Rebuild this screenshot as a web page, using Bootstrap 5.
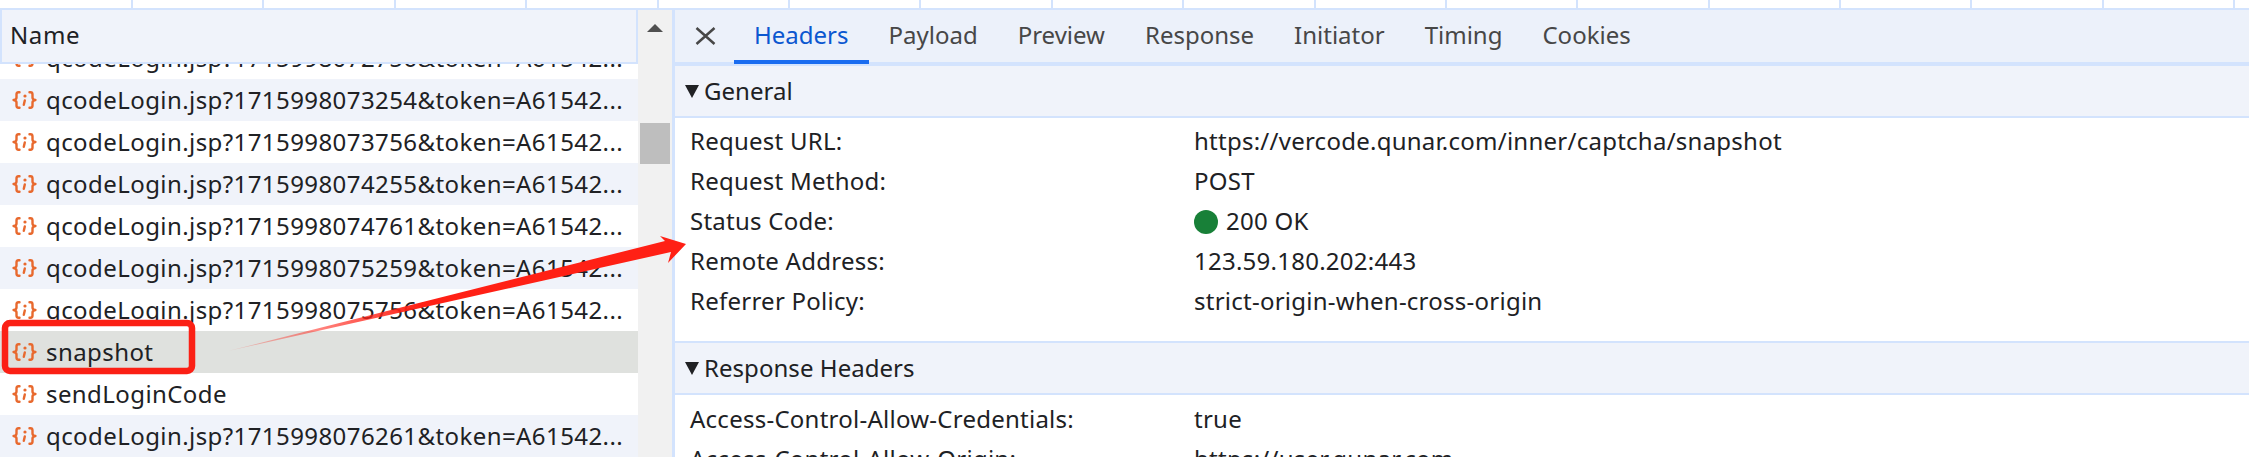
<!DOCTYPE html>
<html lang="en"><head><meta charset="utf-8">
<link href="https://cdn.jsdelivr.net/npm/bootstrap@5.3.0/dist/css/bootstrap.min.css" rel="stylesheet">
<style>
html,body{margin:0;height:457px;overflow:hidden;background:#fff}
body{font-family:"Noto Sans","Open Sans",sans-serif;font-size:24px;letter-spacing:.25px;color:#202124;position:relative}
.ruler{height:10px;border-bottom:2px solid #d3e3fd;padding-left:131px;gap:129.4px}
.ruler i{width:2px;height:8px;background:#d3e3fd;display:block;flex:none}
.main{height:447px}
.netlist{width:672px;flex:none}
.listcol{width:638px;flex:none}
.namehead{height:54px;background:#f0f3fa;border:2px solid #d3e3fd;border-top:0;padding-left:8px;line-height:50px;letter-spacing:.6px}
.rq{height:42px;line-height:42px;padding-left:12px;gap:9px;white-space:nowrap;overflow:hidden;letter-spacing:.42px}
.rq.first{height:15px;align-items:flex-end;line-height:42px}
.rq.stripe{background:#f0f3fa}
.rq.sel{background:#dfe1de}
.rq svg{width:25px;height:18px;flex:none}
.rq.first svg{margin-bottom:12px}
.sbar{width:34px;background:#f1f1f1;position:relative;flex:none}
.sbtn{display:block;margin:14px auto 0}
.sthumb{width:30px;height:41px;background:#bebebe;margin:91px 0 0 2px}
.detail{border-left:3px solid #d3e3fd;min-width:0}
.tabbar{height:56px;background:#ecf1fa;border-bottom:4px solid #d3e3fd}
.xbtn{width:59px;flex:none;padding-left:20px}
.tb{padding:0 20px;height:54px;line-height:50px;color:#474747;white-space:nowrap;letter-spacing:0}
.tb.on{color:#0b57d0;border-bottom:4px solid #1a6cf0}
.sect{height:52px;background:#f0f3fa;border-bottom:2px solid #d3e3fd;padding-left:10px;gap:5px;letter-spacing:.05px}
.sect svg{width:14px;height:13px;flex:none}
.kv{height:40px;line-height:40px;padding-left:15px;white-space:nowrap}
.kv .kk{width:504px;flex:none}
.dot{width:24px;height:24px;border-radius:50%;background:#188038;display:inline-block;margin-right:8px;vertical-align:-4px}
.gen{height:225px;padding-top:3px;border-bottom:2px solid #d3e3fd}
.over{position:absolute;left:0;top:0;pointer-events:none}
</style></head><body>
<div class="ruler d-flex"><i></i><i></i><i></i><i></i><i></i><i></i><i></i><i></i><i></i><i></i><i></i><i></i><i></i><i></i><i></i><i></i><i></i></div>
<svg width="0" height="0" class="position-absolute"><defs>
<symbol id="rqi" viewBox="0 0 25 18"><g fill="none" stroke="#e8692e" stroke-width="2.400" stroke-linecap="round" stroke-linejoin="round"><path d="M7.500 1.300H6.500C5 1.300 4.500 2 4.500 3.500V6.500C4.500 8 3.500 8.800 1.500 9 3.500 9.200 4.500 10 4.500 11.500V14.500C4.500 16 5 16.700 6.500 16.700H7.500"/><path d="M17.500 1.300H18.500C20 1.300 20.500 2 20.500 3.500V6.500C20.500 8 21.500 8.800 23.500 9 21.500 9.200 20.500 10 20.500 11.500V14.500C20.500 16 20 16.700 18.500 16.700H17.500"/><path d="M12.800 9.500L11.800 13.800"/></g><circle cx="13" cy="5" r="1.600" fill="#e8692e"/></symbol>
</defs></svg>
<div class="main d-flex">
 <div class="netlist d-flex">
  <div class="listcol">
   <div class="namehead">Name</div>
   <div class="rq first d-flex"><svg><use href="#rqi"/></svg><span>qcodeLogin.jsp?1715998072756&amp;token=A61542...</span></div>
   <div class="rq stripe d-flex align-items-center"><svg><use href="#rqi"/></svg><span>qcodeLogin.jsp?1715998073254&amp;token=A61542...</span></div>
   <div class="rq d-flex align-items-center"><svg><use href="#rqi"/></svg><span>qcodeLogin.jsp?1715998073756&amp;token=A61542...</span></div>
   <div class="rq stripe d-flex align-items-center"><svg><use href="#rqi"/></svg><span>qcodeLogin.jsp?1715998074255&amp;token=A61542...</span></div>
   <div class="rq d-flex align-items-center"><svg><use href="#rqi"/></svg><span>qcodeLogin.jsp?1715998074761&amp;token=A61542...</span></div>
   <div class="rq stripe d-flex align-items-center"><svg><use href="#rqi"/></svg><span>qcodeLogin.jsp?1715998075259&amp;token=A61542...</span></div>
   <div class="rq d-flex align-items-center"><svg><use href="#rqi"/></svg><span>qcodeLogin.jsp?1715998075756&amp;token=A61542...</span></div>
   <div class="rq sel d-flex align-items-center"><svg><use href="#rqi"/></svg><span>snapshot</span></div>
   <div class="rq d-flex align-items-center"><svg><use href="#rqi"/></svg><span>sendLoginCode</span></div>
   <div class="rq stripe d-flex align-items-center"><svg><use href="#rqi"/></svg><span>qcodeLogin.jsp?1715998076261&amp;token=A61542...</span></div>
  </div>
  <div class="sbar">
   <svg class="sbtn" width="16" height="8" viewBox="0 0 16 8"><path d="M8 0l8 8H0z" fill="#505050"/></svg>
   <div class="sthumb"></div>
  </div>
 </div>
 <div class="detail flex-grow-1">
  <div class="tabbar d-flex">
   <div class="xbtn d-flex align-items-center"><svg width="21" height="18" viewBox="0 0 21 18"><path d="M1.500 1l18 16M19.500 1L1.500 17" stroke="#474747" stroke-width="2.500" fill="none"/></svg></div>
   <div class="tb on">Headers</div><div class="tb">Payload</div><div class="tb">Preview</div><div class="tb">Response</div><div class="tb">Initiator</div><div class="tb">Timing</div><div class="tb">Cookies</div>
  </div>
  <div class="sect d-flex align-items-center"><svg viewBox="0 0 14 13"><path d="M0 0h14L7 13z" fill="#202124"/></svg><span>General</span></div>
  <div class="gen">
   <div class="kv d-flex"><div class="kk">Request URL:</div><div>https://vercode.qunar.com/inner/captcha/snapshot</div></div>
   <div class="kv d-flex"><div class="kk">Request Method:</div><div>POST</div></div>
   <div class="kv d-flex"><div class="kk">Status Code:</div><div><span class="dot"></span>200 OK</div></div>
   <div class="kv d-flex"><div class="kk">Remote Address:</div><div>123.59.180.202:443</div></div>
   <div class="kv d-flex"><div class="kk">Referrer Policy:</div><div>strict-origin-when-cross-origin</div></div>
  </div>
  <div class="sect d-flex align-items-center"><svg viewBox="0 0 14 13"><path d="M0 0h14L7 13z" fill="#202124"/></svg><span>Response Headers</span></div>
  <div class="pt-1">
   <div class="kv d-flex"><div class="kk">Access-Control-Allow-Credentials:</div><div>true</div></div>
   <div class="kv d-flex"><div class="kk">Access-Control-Allow-Origin:</div><div>https://user.qunar.com</div></div>
  </div>
 </div>
</div>
<svg class="over" width="2249" height="457" viewBox="0 0 2249 457">
 <defs><linearGradient id="fade" gradientUnits="userSpaceOnUse" x1="228" y1="351" x2="420" y2="303"><stop offset="0" stop-color="#ff2015" stop-opacity=".15"/><stop offset="1" stop-color="#ff2015"/></linearGradient></defs>
 <path d="M228 351L665 241 660 236 686 244 668 263 671 252z" fill="url(#fade)"/>
 <rect x="5" y="323" width="187" height="48" rx="5" fill="none" stroke="#fb2015" stroke-width="6.500"/>
</svg>
<script src="https://cdn.jsdelivr.net/npm/bootstrap@5.3.0/dist/js/bootstrap.bundle.min.js"></script>
</body></html>
